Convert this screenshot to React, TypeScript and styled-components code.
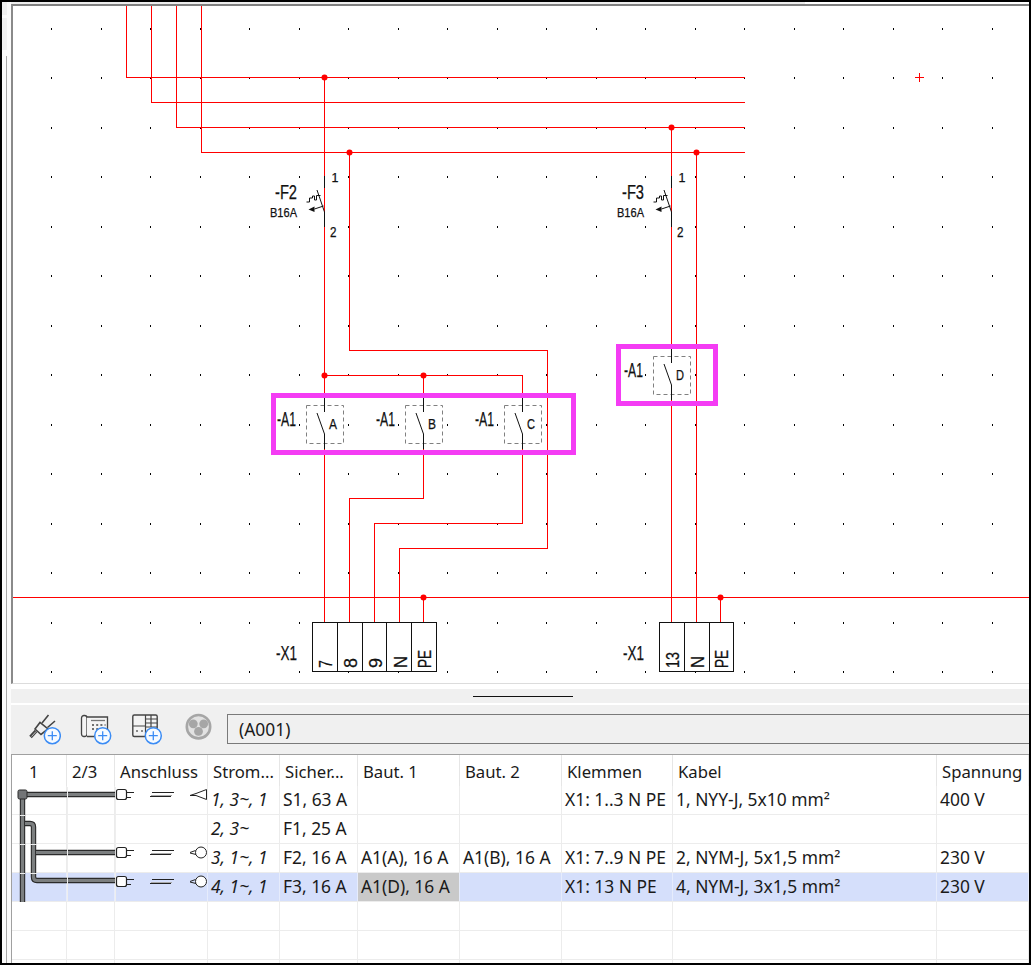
import React from 'react'
import styled, { createGlobalStyle } from 'styled-components'

const RED = '#f00'
const INK = '#111'

const GlobalStyle = createGlobalStyle`
  html, body { margin: 0; padding: 0; background: #fff; }
  * { box-sizing: border-box; }
  #root { width: 1031px; height: 965px; }
`

const Frame = styled.div`
  width: 1031px;
  height: 965px;
  border: 2px solid #000;
  display: flex;
  overflow: hidden;
  background: #fff;
  font-family: "Noto Sans", "Open Sans", sans-serif;
  color: #1a1a1a;
`

const Gutter = styled.div`
  width: 9px;
  flex: none;
  display: flex;
  flex-direction: column;
  background: #fbfbfb;
`

const GutterCap = styled.div`
  width: 5px;
  height: ${p => p.$h}px;
  margin-bottom: 3px;
  background: #f0f0f0;
`

const GutterScroll = styled.div`
  flex: 1;
  width: 1px;
  margin-left: 4px;
  margin-top: 3px;
  background: #a8a8a8;
`

const Main = styled.div`
  flex: 1;
  min-width: 0;
  display: flex;
  flex-direction: column;
`

const TopStrip = styled.div`
  height: 2px;
  flex: none;
  background: #fff;
`

const TopThumb = styled.div`
  width: 794px;
  height: 2px;
  background: #ededed;
`

const Canvas = styled.div`
  height: 680px;
  flex: none;
  border-top: 2px solid #808080;
  border-left: 2px solid #8a8a8a;
  border-bottom: 1px solid #dcdcdc;
  background: #fff;
  svg { display: block; }
`

const Splitter = styled.div`
  height: 14px;
  flex: none;
  margin: 5px 0 2px;
  background: #f0f0f0;
  display: flex;
  align-items: center;
  justify-content: center;
`

const Grip = styled.div`
  width: 100px;
  height: 1px;
  margin-left: 6px;
  background: #111;
`

const Toolbar = styled.div`
  height: 49px;
  flex: none;
  display: flex;
  align-items: flex-start;
  gap: 19px;
  padding: 8px 0 0 18px;
  background: #f0f0f0;
`

const ToolIcon = styled.svg`
  width: 32px;
  height: 32px;
  flex: none;
  display: block;
`

const PathField = styled.div`
  flex: 1;
  height: 30px;
  margin: 1px 0 0 -6px;
  border: 1px solid #7a7a7a;
  border-right: 0;
  padding-left: 11px;
  font-size: 17.4px;
  line-height: 28px;
  background: #f0f0f0;
`

const Table = styled.div`
  position: relative;
  flex: 1;
  min-height: 0;
  overflow: hidden;
  border-top: 1px solid #a0a0a0;
  border-left: 1px solid #a0a0a0;
  background: #fff;
`

const COLS = '55px 48px 93px 72px 78px 102px 102px 111px 264px 1fr'

const HeaderRow = styled.div`
  display: grid;
  grid-template-columns: ${COLS};
  height: 31px;
`

const HeaderCell = styled.div`
  padding-left: ${p => p.$indent ?? 5}px;
  border-right: 1px solid #e6e6e6;
  font-size: 16.7px;
  line-height: 33px;
  white-space: nowrap;
  overflow: hidden;
`

const Row = styled.div`
  display: grid;
  grid-template-columns: ${COLS};
  height: 29px;
  background: ${p => (p.$selected ? '#d5dffb' : '#fff')};
  border-bottom: 1px solid #ececec;
`

const Cell = styled.div`
  padding-left: 3px;
  border-right: 1px solid ${p => (p.$selected ? '#e6ecfc' : '#ececec')};
  background: ${p => (p.$marked ? '#c9c9c9' : 'transparent')};
  font-size: 17.4px;
  font-style: ${p => (p.$italic ? 'italic' : 'normal')};
  line-height: 27px;
  white-space: nowrap;
  overflow: hidden;
`

const TreeOverlay = styled.svg`
  position: absolute;
  left: 0;
  top: 0;
  width: 210px;
  height: 150px;
  pointer-events: none;
`

const Label = styled.text`
  font-family: "Liberation Sans", Arial, sans-serif;
  fill: #111;
  stroke: #111;
  stroke-width: 0.25px;
`

// --- schematic ---

const gridX = Array.from({ length: 20 }, (_, i) => Math.round(51.2 + 49.5 * i))
const gridY = Array.from({ length: 14 }, (_, i) => Math.round(27.9 + 49.5 * i))

const wires = [
  'M126.5 5V77.5H745',
  'M151.5 5V102.5H745',
  'M176.5 5V127.5H745',
  'M201.5 5V152.5H745',
  'M324.5 77.5V622',
  'M349.5 152.5V350.5H547.5V548.5H399.5V622',
  'M324.5 375.5H522.5V523.5H374.5V622',
  'M423.5 375.5V498.5H349.5V622',
  'M13 597.5H1029',
  'M423.5 597.5V622',
  'M671.5 127.5V622',
  'M696.5 152.5V622',
  'M720.5 597.5V622',
  'M914.5 77.5H923.5M919 73V82',
]

const nodes: [number, number][] = [
  [324.5, 77.5], [349.5, 152.5], [324.5, 375.5], [423.5, 375.5],
  [423.5, 597.5], [671.5, 127.5], [696.5, 152.5], [720.5, 597.5],
]

const Breaker = ({ x, name }: { x: number; name: string }) => (
  <g>
    <path d={`M${x} 176V188`} stroke={INK} fill="none" />
    <path d={`M${x - 7.5} 190L${x} 212V227`} stroke={INK} fill="none" />
    <path
      d={`M${x - 18} 202H${x - 15}V198H${x - 12}V196H${x - 10}V200H${x - 8}V195.5H${x - 4}`}
      stroke={INK}
      fill="none"
    />
    <path d={`M${x - 1} 206L${x - 10} 209`} stroke={INK} fill="none" />
    <path d={`M${x - 16} 209.5L${x - 10} 206.5V212Z`} fill={INK} />
    <Label x={x - 49.5} y={198.5} fontSize="19.5" textLength={22} lengthAdjust="spacingAndGlyphs">{name}</Label>
    <Label x={x - 54.5} y={216.5} fontSize="13" textLength={27} lengthAdjust="spacingAndGlyphs">B16A</Label>
    <Label x={x + 7} y={181.5} fontSize="12.5">1</Label>
    <Label x={x + 5.5} y={236.5} fontSize="14" textLength={6.5} lengthAdjust="spacingAndGlyphs">2</Label>
  </g>
)

const Contactor = ({ x, y, letter }: { x: number; y: number; letter: string }) => (
  <g>
    <rect x={x - 18} y={y + 0.5} width={37} height={38} fill="#fff" stroke="#808080" strokeDasharray="4 3" />
    <path d={`M${x} ${y - 7}V${y + 7}`} stroke={INK} fill="none" />
    <path d={`M${x - 7.5} ${y + 8}L${x} ${y + 29}V${y + 44}`} stroke={INK} fill="none" />
    <Label x={x - 47.5} y={y + 20.5} fontSize="20.5" textLength={19} lengthAdjust="spacingAndGlyphs">-A1</Label>
    <Label x={x + 4.5} y={y + 24} fontSize="14" textLength={8} lengthAdjust="spacingAndGlyphs">{letter}</Label>
  </g>
)

const TerminalBlock = ({ x, cells }: { x: number; cells: { w: number; wire: number; t: string; len: number }[] }) => {
  let left = x
  const total = cells.reduce((s, c) => s + c.w, 0)
  return (
    <g>
      <rect x={x + 0.5} y={622.5} width={total} height={49} fill="#fff" stroke={INK} />
      {cells.map(c => {
        const at = left
        left += c.w
        return (
          <g key={c.t}>
            <path d={`M${at + c.w + 0.5} 622V672`} stroke={INK} fill="none" />
            <Label
              transform={`rotate(-90 ${c.wire + 7.5} 668)`}
              x={c.wire + 7.5}
              y={668}
              fontSize="19"
              textLength={c.len}
              lengthAdjust="spacingAndGlyphs"
            >
              {c.t}
            </Label>
          </g>
        )
      })}
      <Label x={x - 36} y={660} fontSize="19.5" textLength={21} lengthAdjust="spacingAndGlyphs">-X1</Label>
    </g>
  )
}

const Schematic = () => (
  // viewBox uses the coordinates of the page, one unit per pixel
  <svg width="1016" height="677" viewBox="13 6 1016 677">
    <g shapeRendering="crispEdges">
      {gridX.map(x => gridY.map(y => <rect key={`${x}-${y}`} x={x} y={y} width="1" height="2" fill="#000" />))}
    </g>
    <g shapeRendering="crispEdges">
      {wires.map(d => <path key={d} d={d} fill="none" stroke={RED} />)}
    </g>
    {nodes.map(([x, y]) => <circle key={`${x}-${y}`} cx={x} cy={y} r="3" fill={RED} />)}
    <Breaker x={324.5} name="-F2" />
    <Breaker x={671.5} name="-F3" />
    <Contactor x={324.5} y={405} letter="A" />
    <Contactor x={423.5} y={405} letter="B" />
    <Contactor x={522.5} y={405} letter="C" />
    <Contactor x={671.5} y={356} letter="D" />
    <path d="M547.5 405V444" stroke={RED} shapeRendering="crispEdges" />
    <rect x="273.5" y="395.5" width="300" height="57" fill="none" stroke="#f43cf4" strokeWidth="5" />
    <rect x="618.5" y="346.5" width="97" height="57" fill="none" stroke="#f43cf4" strokeWidth="5" />
    <TerminalBlock
      x={312}
      cells={[
        { w: 25, wire: 324.5, t: '7', len: 8 },
        { w: 25, wire: 349.5, t: '8', len: 10 },
        { w: 24, wire: 374.5, t: '9', len: 10 },
        { w: 25, wire: 399, t: 'N', len: 12 },
        { w: 25, wire: 423.5, t: 'PE', len: 18 },
      ]}
    />
    <TerminalBlock
      x={659}
      cells={[
        { w: 25, wire: 671.5, t: '13', len: 16 },
        { w: 25, wire: 696.5, t: 'N', len: 12 },
        { w: 24, wire: 720.5, t: 'PE', len: 18 },
      ]}
    />
  </svg>
)

// --- toolbar icons ---

const PlusBadge = ({ x }: { x: number }) => (
  <g>
    <circle cx={x} cy="22.7" r="8" fill="#f7fbff" stroke="#3b8cf5" strokeWidth="1.5" />
    <path d={`M${x - 4.5} 22.7H${x + 4.5}M${x} 18.2V27.2`} stroke="#3b8cf5" strokeWidth="1.3" />
  </g>
)

const PlugIcon = () => (
  <ToolIcon viewBox="0 0 32 32">
    <path d="M1.5 24L7 18" stroke="#444" strokeWidth="3.4" />
    <path d="M2.5 23.5L7 18.5" stroke="#ddd" strokeWidth="0.8" />
    <path d="M6 16L11 9.5L19 16L12 21.5Z" fill="#f0f0f0" stroke="#444" strokeWidth="1.6" />
    <path d="M13 10L19.5 2M18.5 14.5L26 8" stroke="#444" strokeWidth="1.6" fill="none" />
    <PlusBadge x={23.3} />
  </ToolIcon>
)

const PhoneIcon = () => (
  <ToolIcon viewBox="0 0 32 32">
    <rect x="1.5" y="2.5" width="5.5" height="21" rx="2.5" fill="#f4f4f4" stroke="#444" strokeWidth="1.3" />
    <path d="M7 4H27.5V23.5H7" fill="#f4f4f4" stroke="#444" strokeWidth="1.3" />
    <path d="M11 7.5H25" stroke="#777" strokeWidth="1.3" />
    <path d="M12 12H25.5M12 16H25.5" stroke="#444" strokeWidth="1.6" strokeDasharray="2 2.2" />
    <PlusBadge x={22.7} />
  </ToolIcon>
)

const PanelIcon = () => (
  <ToolIcon viewBox="0 0 32 32">
    <rect x="1.8" y="2" width="24.4" height="21.5" rx="1.5" fill="#f4f4f4" stroke="#444" strokeWidth="1.4" />
    <path d="M14.5 2V23M2 13H14.5M14.5 6H26M14.5 10H26M14.5 14H26M20 2V14" stroke="#444" strokeWidth="1.2" fill="none" />
    <path d="M5 18H7M10 18H12" stroke="#666" strokeWidth="1.6" />
    <PlusBadge x={22.3} />
  </ToolIcon>
)

const PhasesIcon = () => (
  <ToolIcon viewBox="0 0 32 32">
    <circle cx="16.5" cy="13.7" r="11.7" fill="#e2e2e2" stroke="#a6a6a6" strokeWidth="2.6" />
    <circle cx="11.3" cy="10.8" r="4.4" fill="#a6a6a6" />
    <circle cx="21.7" cy="10.8" r="4.4" fill="#a6a6a6" />
    <circle cx="16.5" cy="18.4" r="4.4" fill="#a6a6a6" />
  </ToolIcon>
)

// --- connection tree drawn over the first table columns ---

const Pipe = ({ d }: { d: string }) => (
  <g fill="none">
    <path d={d} stroke="#2b2b2b" strokeWidth="5.4" />
    <path d={d} stroke="#7c7f80" strokeWidth="3.2" />
  </g>
)

const Connector = ({ y, lamp }: { y: number; lamp: 'cone' | 'bulb' }) => (
  <g fill="none" stroke="#222" strokeWidth="1">
    <rect x="115.5" y={y - 5} width="10" height="10" rx="2" fill="#fff" strokeWidth="1.2" />
    <path d={`M125 ${y - 2}H133M125 ${y + 3}H130`} />
    <path d={`M151 ${y - 2}H173M149 ${y + 2}H170`} />
    <path d={`M150 ${y + 1}H171`} stroke="#aaa" />
    {lamp === 'cone' ? (
      <path d={`M189 ${y + 1}L195 ${y - 1}L205.5 ${y - 5}V${y + 5}L195 ${y + 1}H189`} />
    ) : (
      <g>
        <circle cx="200" cy={y} r="5.5" fill="#fff" />
        <path d={`M189 ${y}L194.5 ${y - 2}M189 ${y + 0.5}L195 ${y + 2}`} />
      </g>
    )}
  </g>
)

const Tree = () => (
  <TreeOverlay viewBox="11 754 210 150">
    <Pipe d="M21.5 795V901" />
    <Pipe d="M24 822.5H29Q32.5 822.5 32.5 826V876Q32.5 879.5 36 879.5H115" />
    <Pipe d="M35 851.5H115" />
    <Pipe d="M24 793.5H115" />
    <rect x="17" y="789" width="9" height="9" rx="1.5" fill="#737577" stroke="#2b2b2b" />
    <path d="M66.5 786V901M114.5 786V901M19 814.5H24M19 843.5H24M19 872.5H24M29 843.5H36M29 872.5H36" stroke="#eee" />
    <Connector y={793.5} lamp="cone" />
    <Connector y={851.5} lamp="bulb" />
    <Connector y={880.5} lamp="bulb" />
  </TreeOverlay>
)

const columns = ['1', '2/3', 'Anschluss', 'Strom...', 'Sicher...', 'Baut. 1', 'Baut. 2', 'Klemmen', 'Kabel', 'Spannung']

const rows = [
  { strom: '1, 3~, 1', fuse: 'S1, 63 A', b1: '', b2: '', term: 'X1: 1..3 N PE', cable: '1, NYY-J, 5x10 mm²', volt: '400 V' },
  { strom: '2, 3~', fuse: 'F1, 25 A', b1: '', b2: '', term: '', cable: '', volt: '' },
  { strom: '3, 1~, 1', fuse: 'F2, 16 A', b1: 'A1(A), 16 A', b2: 'A1(B), 16 A', term: 'X1: 7..9 N PE', cable: '2, NYM-J, 5x1,5 mm²', volt: '230 V' },
  { strom: '4, 1~, 1', fuse: 'F3, 16 A', b1: 'A1(D), 16 A', b2: '', term: 'X1: 13 N PE', cable: '4, NYM-J, 3x1,5 mm²', volt: '230 V', selected: true },
  { strom: '', fuse: '', b1: '', b2: '', term: '', cable: '', volt: '' },
  { strom: '', fuse: '', b1: '', b2: '', term: '', cable: '', volt: '' },
  { strom: '', fuse: '', b1: '', b2: '', term: '', cable: '', volt: '' },
]

export default function App() {
  return (
    <>
      <GlobalStyle />
      <Frame>
        <Gutter>
          <GutterCap $h={13} />
          <GutterCap $h={32} />
          <GutterScroll />
        </Gutter>
        <Main>
          <TopStrip><TopThumb /></TopStrip>
          <Canvas><Schematic /></Canvas>
          <Splitter><Grip /></Splitter>
          <Toolbar>
            <PlugIcon />
            <PhoneIcon />
            <PanelIcon />
            <PhasesIcon />
            <PathField>(A001)</PathField>
          </Toolbar>
          <Table>
            <HeaderRow>
              {columns.map((c, i) => (
                <HeaderCell key={c} $indent={i === 0 ? 17 : undefined}>{c}</HeaderCell>
              ))}
            </HeaderRow>
            {rows.map((r, i) => (
              <Row key={i} $selected={r.selected}>
                <Cell $selected={r.selected} />
                <Cell $selected={r.selected} />
                <Cell $selected={r.selected} />
                <Cell $selected={r.selected} $italic>{r.strom}</Cell>
                <Cell $selected={r.selected}>{r.fuse}</Cell>
                <Cell $selected={r.selected} $marked={r.selected}>{r.b1}</Cell>
                <Cell $selected={r.selected}>{r.b2}</Cell>
                <Cell $selected={r.selected}>{r.term}</Cell>
                <Cell $selected={r.selected}>{r.cable}</Cell>
                <Cell $selected={r.selected}>{r.volt}</Cell>
              </Row>
            ))}
            <Tree />
          </Table>
        </Main>
      </Frame>
    </>
  )
}
